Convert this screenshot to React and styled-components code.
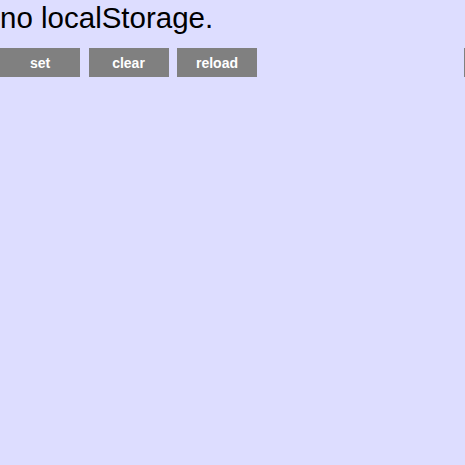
import React from 'react';
import styled, { createGlobalStyle } from 'styled-components';

const GlobalStyle = createGlobalStyle`
  html, body {
    margin: 0;
    padding: 0;
    background: #ddddff;
    overflow: hidden;
  }
  body {
    font-family: "Liberation Sans", Arial, sans-serif;
  }
`;

const Page = styled.div`
  width: 465px;
  height: 465px;
  padding-top: 1px;
  box-sizing: border-box;
`;

const Message = styled.div`
  font-size: 29.5px;
  color: #000;
  margin: 0 0 13px 0;
`;

const ButtonRow = styled.div`
  display: flex;
  gap: 8.5px;
  width: 600px;
`;

const Button = styled.button`
  flex-shrink: 0;
  width: 80px;
  height: 29px;
  border: none;
  padding: 0;
  background: #808080;
  color: #fff;
  font-family: "Liberation Sans", Arial, sans-serif;
  font-size: 14px;
  font-weight: bold;
  margin-left: ${(p) => p.$offset || 0}px;
`;

export default function App() {
  return (
    <>
      <GlobalStyle />
      <Page>
        <Message>no localStorage.</Message>
        <ButtonRow>
          <Button>set</Button>
          <Button>clear</Button>
          <Button>reload</Button>
          <Button $offset={198} aria-label="more" />
        </ButtonRow>
      </Page>
    </>
  );
}
